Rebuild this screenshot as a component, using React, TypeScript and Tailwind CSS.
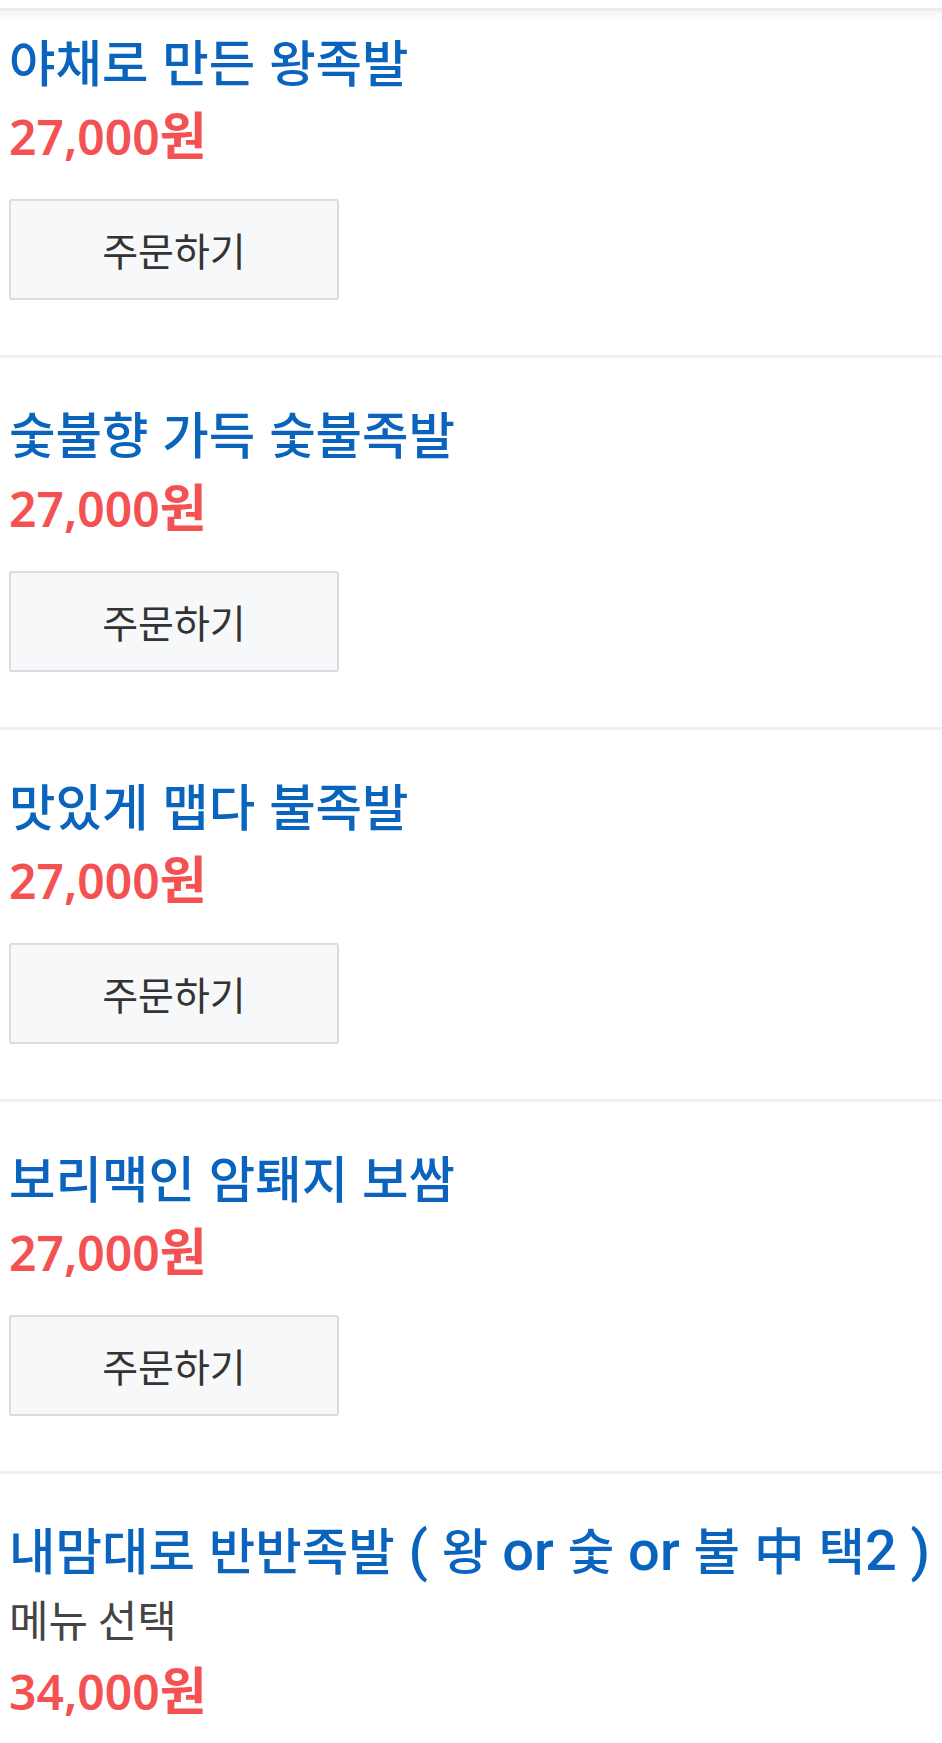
import React from "react";

type Item = { name: string; price: string; option?: string };

const items: Item[] = [
  { name: "야채로 만든 왕족발", price: "27,000원" },
  { name: "숯불향 가득 숯불족발", price: "27,000원" },
  { name: "맛있게 맵다 불족발", price: "27,000원" },
  { name: "보리맥인 암퇘지 보쌈", price: "27,000원" },
  {
    name: "내맘대로 반반족발 ( 왕 or 숯 or 불 中 택2 )",
    price: "34,000원",
    option: "메뉴 선택",
  },
];

// split into hangul/hanja runs and latin runs (device font mixes two sizes)
const splitRuns = (s: string) =>
  s.split(/([\u3131-\uD7A3\u4E00-\u9FFF]+)/).filter((r) => r !== "");
const isCjk = (s: string) => /[\u3131-\uD7A3\u4E00-\u9FFF]/.test(s);

function Title({ text }: { text: string }) {
  return (
    <div className="text-[56px] leading-[60px] font-medium text-[#0a64be] whitespace-nowrap [font-family:Roboto,sans-serif]">
      {splitRuns(text).map((r, i) =>
        isCjk(r) ? (
          <span
            key={i}
            className="text-[50.5px] leading-[50px] font-medium [font-family:'Noto_Sans_CJK_KR',sans-serif]"
          >
            {r}
          </span>
        ) : (
          <span key={i}>{r}</span>
        )
      )}
    </div>
  );
}

function Price({ text, className }: { text: string; className: string }) {
  return (
    <div
      className={
        className +
        " text-[48px] leading-[50px] font-semibold text-[#f45252] [font-family:'Noto_Sans',sans-serif]"
      }
    >
      {splitRuns(text).map((r, i) =>
        isCjk(r) ? (
          <span
            key={i}
            className="text-[51px] leading-[40px] font-bold [font-family:'Noto_Sans_CJK_KR',sans-serif]"
          >
            {r}
          </span>
        ) : (
          <span key={i}>{r}</span>
        )
      )}
    </div>
  );
}

function MenuItem({ item, first }: { item: Item; first?: boolean }) {
  return (
    <div
      className={
        first
          ? "px-[9px] pt-[12px] pb-[55px]"
          : "border-t-[3px] border-[#f0f0f2] px-[9px] pt-[47px] pb-[55px]"
      }
    >
      <Title text={item.name} />
      {item.option && (
        <div className="mt-[12px] text-[43px] leading-[50px] text-[#444] [font-family:'Noto_Sans_CJK_KR',sans-serif]">
          {item.option}
        </div>
      )}
      <Price text={item.price} className={item.option ? "mt-[24px]" : "mt-[19px]"} />
      {!item.option && (
        <button className="mt-[37px] w-[330px] h-[101px] rounded-[3px] border-2 border-[#dcdce0] bg-[#f7f8fa] text-[39px] text-[#333] [font-family:'Noto_Sans_CJK_KR',sans-serif]">
          주문하기
        </button>
      )}
    </div>
  );
}

export default function App() {
  return (
    <div className="w-[942px] min-h-[1743px] bg-white overflow-hidden">
      <div className="h-[8px] bg-white" />
      <div className="h-[3px] bg-[#ececee]" />
      <div className="h-[10px] bg-gradient-to-b from-[#f6f6f7] to-white" />
      {items.map((item, i) => (
        <MenuItem key={item.name} item={item} first={i === 0} />
      ))}
    </div>
  );
}
